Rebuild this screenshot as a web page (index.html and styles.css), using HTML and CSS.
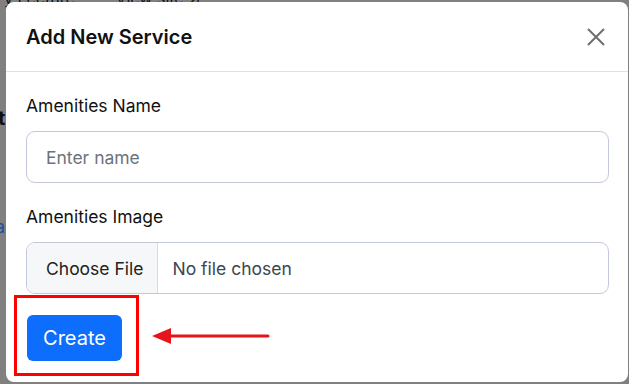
FILE: index.html
```html
<!DOCTYPE html>
<html>
<head>
<meta charset="utf-8">
<link rel="stylesheet" href="styles.css">
</head>
<body>
<div class="backdrop-page">
  <span class="bg-top">y Lecture:&nbsp;&nbsp;&nbsp;&nbsp;&nbsp;&nbsp;&nbsp;&nbsp;View site ↗</span>
  <span class="bg-t">t</span>
  <span class="bg-a">a</span>
</div>
<div class="modal">
  <div class="modal-header">
    <h5 class="modal-title">Add New Service</h5>
    <button class="close" aria-label="Close">
      <svg width="18" height="18" viewBox="0 0 18 18"><path d="M1 1 L17 17 M17 1 L1 17" stroke="#6e6e6e" stroke-width="2" fill="none"/></svg>
    </button>
  </div>
  <div class="modal-body">
    <label class="form-label">Amenities Name</label>
    <div class="text-input">Enter name</div>
    <label class="form-label second">Amenities Image</label>
    <div class="file-input">
      <span class="file-btn">Choose File</span>
      <span class="file-name">No file chosen</span>
    </div>
    <div class="actions">
      <div class="highlight">
        <button class="btn-create">Create</button>
      </div>
      <svg class="arrow" width="118" height="18" viewBox="0 0 118 18">
        <path d="M16 9 H116" stroke="#e8141b" stroke-width="3" stroke-linecap="round"/>
        <path d="M0 9 L19 1 L19 17 Z" fill="#e8141b"/>
      </svg>
    </div>
  </div>
</div>
</body>
</html>
```
FILE: styles.css
```css
html, body {
  margin: 0;
  padding: 0;
  width: 629px;
  height: 384px;
  overflow: hidden;
  background: #808080;
  font-family: Inter, "Noto Sans", sans-serif;
  position: relative;
}

.backdrop-page {
  position: absolute;
  inset: 0;
  color: #111;
}
.bg-top {
  position: absolute;
  left: 4px;
  top: -12px;
  font-size: 16px;
}
.bg-t {
  position: absolute;
  left: -2px;
  top: 106px;
  font-size: 20px;
  font-weight: 700;
}
.bg-a {
  position: absolute;
  left: -5px;
  top: 216px;
  font-size: 18px;
  color: #1f4f9a;
}

.modal {
  position: absolute;
  left: 6px;
  top: 2px;
  width: 622px;
  height: 380px;
  background: #fff;
  border-radius: 8px;
  box-sizing: border-box;
}

.modal-header {
  display: flex;
  align-items: center;
  justify-content: space-between;
  height: 70px;
  padding: 0 20px;
  border-bottom: 1px solid #dee2e6;
  box-sizing: border-box;
}
.modal-title {
  margin: 0;
  font-size: 20px;
  font-weight: 600;
  color: #111;
  line-height: 30px;
}
.close {
  background: none;
  border: none;
  padding: 0;
  margin-right: 3px;
  width: 18px;
  height: 18px;
  display: flex;
}

.modal-body {
  padding: 20px 19px 0 20px;
}
.form-label {
  display: block;
  font-size: 17.5px;
  color: #111;
  line-height: 24px;
  margin-top: 2px;
  margin-bottom: 13px;
}
.form-label.second {
  margin-top: 22px;
  margin-bottom: 13px;
}
.text-input {
  height: 52px;
  border: 1px solid #c4c8dc;
  border-radius: 9px;
  box-sizing: border-box;
  padding: 0 19px;
  display: flex;
  align-items: center;
  font-size: 17.5px;
  color: #6c737d;
}
.file-input {
  height: 52px;
  border: 1px solid #c4c8dc;
  border-radius: 9px;
  box-sizing: border-box;
  display: flex;
  align-items: stretch;
  overflow: hidden;
  font-size: 17.5px;
}
.file-btn {
  display: flex;
  align-items: center;
  padding: 0 13px 0 19px;
  background: #f6f7f9;
  border-right: 1px solid #d8dbe4;
  color: #222;
}
.file-name {
  display: flex;
  align-items: center;
  padding-left: 15px;
  color: #3c4652;
}

.actions {
  display: flex;
  align-items: center;
  margin-left: -12px;
  margin-top: 1px;
}
.highlight {
  width: 125px;
  height: 81px;
  box-sizing: border-box;
  border: 3px solid #f00;
  padding: 17px 0 0 10px;
}
.btn-create {
  width: 95px;
  height: 46px;
  background: #0d6efd;
  color: #fff;
  border: none;
  border-radius: 6px;
  font-family: Inter, "Noto Sans", sans-serif;
  font-size: 20px;
  padding: 0;
}
.arrow {
  margin-left: 13px;
  margin-top: 1px;
}
```
